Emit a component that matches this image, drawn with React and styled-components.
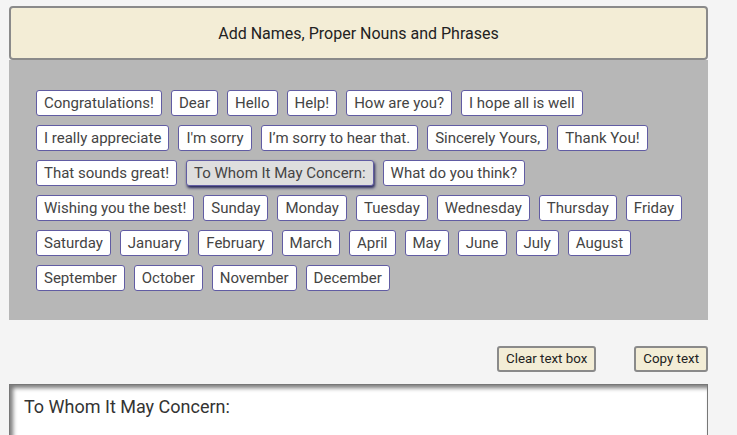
import React, { useState } from "react";
import styled, { createGlobalStyle } from "styled-components";

const GlobalStyle = createGlobalStyle`
  body {
    margin: 0;
    background: #f4f4f4;
    font-family: Roboto, "Liberation Sans", sans-serif;
  }
`;

const Page = styled.div`
  width: 699px;
  padding: 6px 0 0 9px;
`;

const Header = styled.div`
  height: 50px;
  border: 2px solid #8a8a8a;
  border-radius: 4px;
  background: #f3edd6;
  display: flex;
  align-items: center;
  justify-content: center;
  font-size: 16px;
  color: #222;
`;

const Panel = styled.div`
  background: #b7b7b7;
  padding: 30px 22px 29px 27px;
  display: flex;
  flex-wrap: wrap;
  gap: 9px 9px;
`;

const Chip = styled.button`
  font-family: inherit;
  font-size: 15px;
  line-height: 18px;
  color: #444;
  background: ${(p) => (p.$active ? "#dedede" : "#fff")};
  border: 1px solid #615ca3;
  border-radius: 3px;
  padding: 3px 7px;
  box-shadow: ${(p) => (p.$active ? "1px 2px 3px #23235a" : "none")};
  cursor: pointer;
`;

const Actions = styled.div`
  display: flex;
  justify-content: flex-end;
  gap: 38px;
  margin-top: 26px;
`;

const ActionButton = styled.button`
  font-family: inherit;
  font-size: 13.33px;
  line-height: 16px;
  color: #222;
  background: #f3edd6;
  border: 2px solid #8a8a8a;
  border-radius: 3px;
  padding: 3px 7px;
  cursor: pointer;
`;

const TextBox = styled.textarea`
  display: block;
  box-sizing: border-box;
  width: 699px;
  height: 110px;
  margin-top: 12px;
  padding: 11px 14px;
  font-family: inherit;
  font-size: 18px;
  color: #333;
  background: #fff;
  border: 1px solid #777;
  border-bottom: none;
  box-shadow: inset 3px 3px 4px #7a7a7a;
  resize: none;
  outline: none;
`;

const phrases = [
  "Congratulations!", "Dear", "Hello", "Help!", "How are you?", "I hope all is well",
  "I really appreciate", "I'm sorry", "I\u2019m sorry to hear that.", "Sincerely Yours,", "Thank You!",
  "That sounds great!", "To Whom It May Concern:", "What do you think?",
  "Wishing you the best!", "Sunday", "Monday", "Tuesday", "Wednesday", "Thursday", "Friday",
  "Saturday", "January", "February", "March", "April", "May", "June", "July", "August",
  "September", "October", "November", "December",
];

export default function App() {
  const [active, setActive] = useState("To Whom It May Concern:");
  const [text, setText] = useState("To Whom It May Concern:");

  return (
    <Page>
      <GlobalStyle />
      <Header>Add Names, Proper Nouns and Phrases</Header>
      <Panel>
        {phrases.map((p) => (
          <Chip
            key={p}
            $active={p === active}
            onClick={() => {
              setActive(p);
              setText((t) => (t ? t + " " + p : p));
            }}
          >
            {p}
          </Chip>
        ))}
      </Panel>
      <Actions>
        <ActionButton onClick={() => setText("")}>Clear text box</ActionButton>
        <ActionButton onClick={() => navigator.clipboard?.writeText(text)}>Copy text</ActionButton>
      </Actions>
      <TextBox value={text} onChange={(e) => setText(e.target.value)} />
    </Page>
  );
}
